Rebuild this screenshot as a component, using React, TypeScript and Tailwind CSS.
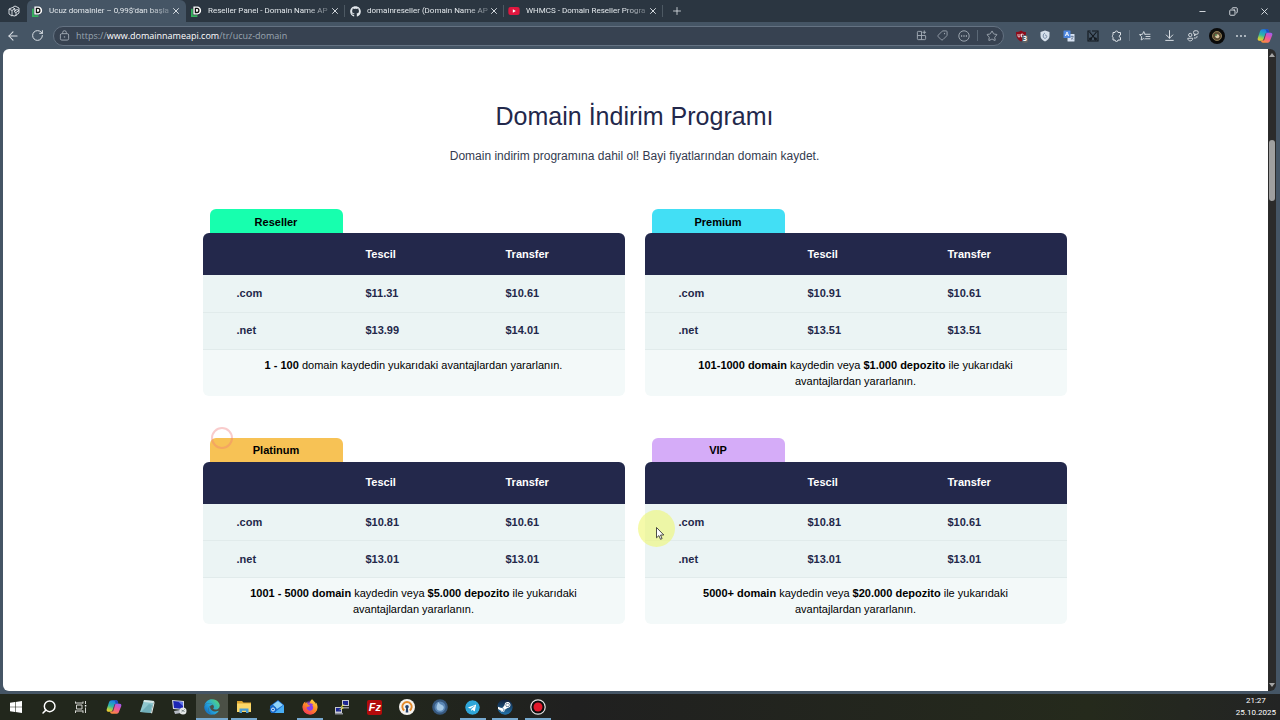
import type { ReactNode } from "react";
import { FaGithub, FaYoutube, FaEdge, FaFirefoxBrowser, FaSteam, FaTelegram } from "react-icons/fa";
import { ArrowDownToLine, ArrowLeft, Copy, Minus, Plus, RotateCw, Search, Star, Tag, X } from "lucide-react";

type Plan = {
  name: string;
  tab: string;
  com: [string, string];
  net: [string, string];
  note: ReactNode;
};

const plans: Plan[] = [
  {
    name: "Reseller",
    tab: "bg-[#17ffae]",
    com: ["$11.31", "$10.61"],
    net: ["$13.99", "$14.01"],
    note: (
      <>
        <b>1 - 100</b> domain kaydedin yukarıdaki avantajlardan yararlanın.
      </>
    ),
  },
  {
    name: "Premium",
    tab: "bg-[#42dff5]",
    com: ["$10.91", "$10.61"],
    net: ["$13.51", "$13.51"],
    note: (
      <>
        <b>101-1000 domain</b> kaydedin veya <b>$1.000 depozito</b> ile yukarıdaki avantajlardan yararlanın.
      </>
    ),
  },
  {
    name: "Platinum",
    tab: "bg-[#f7c255]",
    com: ["$10.81", "$10.61"],
    net: ["$13.01", "$13.01"],
    note: (
      <>
        <b>1001 - 5000 domain</b> kaydedin veya <b>$5.000 depozito</b> ile yukarıdaki avantajlardan yararlanın.
      </>
    ),
  },
  {
    name: "VIP",
    tab: "bg-[#d5acf8]",
    com: ["$10.81", "$10.61"],
    net: ["$13.01", "$13.01"],
    note: (
      <>
        <b>5000+ domain</b> kaydedin veya <b>$20.000 depozito</b> ile yukarıdaki avantajlardan yararlanın.
      </>
    ),
  },
];

function PlanCard({ plan }: { plan: Plan }) {
  return (
    <section aria-label={plan.name}>
      <h2
        className={`ml-[7px] flex h-6 w-[133px] items-center justify-center rounded-t-md pt-0.5 text-[11px] font-bold text-black ${plan.tab}`}
      >
        {plan.name}
      </h2>
      <div className="overflow-hidden rounded-md bg-[#f3f9f9]">
        <table className="w-full table-fixed border-collapse text-left text-[11px] text-[#23284a]">
          <colgroup>
            <col className="w-[38.6%]" />
            <col className="w-[33.2%]" />
            <col />
          </colgroup>
          <thead className="bg-[#23284b] text-white">
            <tr className="h-[42px]">
              <td />
              <th scope="col">Tescil</th>
              <th scope="col">Transfer</th>
            </tr>
          </thead>
          <tbody className="bg-[#ebf4f4] font-bold">
            {[
              { tld: ".com", prices: plan.com },
              { tld: ".net", prices: plan.net },
            ].map((row) => (
              <tr key={row.tld} className="h-[37px] border-b border-[#e1ebeb]">
                <th scope="row" className="pl-[34px]">
                  {row.tld}
                </th>
                <td>{row.prices[0]}</td>
                <td>{row.prices[1]}</td>
              </tr>
            ))}
          </tbody>
        </table>
        <p className="min-h-[46px] px-10 py-[7px] text-center text-[11px] leading-4 text-black">{plan.note}</p>
      </div>
    </section>
  );
}

function DomainFavicon() {
  return (
    <svg viewBox="0 0 12 12" className="size-[11px]">
      <path d="M1 3v8h6" fill="none" stroke="#35b05c" strokeWidth="2" />
      <path d="M2.600.6h4.200A4 4 0 0 1 11 4.900a4 4 0 0 1-4.200 4.300H2.600z" fill="#fff" />
      <path d="M4.800 2.700h1.800c1.300 0 2 .9 2 2.200s-.7 2.200-2 2.200H4.800z" fill="none" stroke="#111" strokeWidth="1.400" />
    </svg>
  );
}

function YoutubeFavicon() {
  return (
    <span className="flex h-2 w-3 items-center justify-center text-[#e1173f]">
      <FaYoutube className="size-3 bg-[linear-gradient(#fff,#fff)] bg-[length:4px_4px] bg-center bg-no-repeat" />
    </span>
  );
}

const tabs = [
  { title: "Ucuz domainler – 0,99$'dan başla", icon: <DomainFavicon />, active: true },
  { title: "Reseller Panel - Domain Name AP", icon: <DomainFavicon />, active: false },
  { title: "domainreseller (Domain Name AP", icon: <FaGithub className="size-[11px]" />, active: false },
  { title: "WHMCS - Domain Reseller Progra", icon: <YoutubeFavicon />, active: false },
];

function TabBar() {
  return (
    <header className="flex h-[22px] items-stretch bg-[#2b3641] text-[#e3e8ec]">
      <button aria-label="Çalışma alanları" className="flex w-[27px] items-center justify-center">
        <svg viewBox="0 0 24 24" className="size-3" fill="none" stroke="currentColor" strokeWidth="1.800" strokeLinejoin="round">
          <path d="M2 8l7-3 5 2.500V12M2 8l6 3v11l-6-4zM8 11l6-3.500" />
          <path d="M9 5l5-3 8 4v10l-8 6-6-1M12 13l4 2v7M12 13l6-4 4 2M16 15l6-4" />
        </svg>
      </button>
      {tabs.map((tab) => (
        <div
          key={tab.title}
          className={`flex w-[159px] items-center pr-[5px] pl-1 ${
            tab.active
              ? "rounded-t-md bg-[#455565]"
              : "bg-[linear-gradient(#4d5963,#4d5963)] bg-[length:1px_12px] bg-right bg-no-repeat"
          }`}
        >
          <span className="flex w-3 justify-center">{tab.icon}</span>
          <a
            href="#"
            className="ml-[6px] font-[Roboto,sans-serif] text-[8px] leading-4 whitespace-nowrap [mask-image:linear-gradient(to_right,black_82%,#0005)]"
          >
            {tab.title}
          </a>
          <button aria-label="Sekmeyi kapat" className="ml-auto flex w-2.5 justify-center">
            <X className="size-[10px]" strokeWidth={2.2} />
          </button>
        </div>
      ))}
      <button aria-label="Yeni sekme" className="flex w-[27px] items-center justify-center">
        <Plus className="size-3" strokeWidth={1.6} />
      </button>
      <div className="ml-auto flex">
        <button aria-label="Simge durumuna küçült" className="flex w-[31px] items-center justify-center">
          <Minus className="size-[9px]" strokeWidth={2.4} />
        </button>
        <button aria-label="Önceki boyut" className="flex w-[31px] items-center justify-center">
          <Copy className="size-[9px] -scale-x-100" strokeWidth={2.4} />
        </button>
        <button aria-label="Kapat" className="flex w-[31px] items-center justify-center">
          <X className="size-[11px]" />
        </button>
      </div>
    </header>
  );
}

function CopilotIcon({ className }: { className: string }) {
  return (
    <svg viewBox="0 0 24 24" className={className}>
      <defs>
        <linearGradient id="cp-a" x1="0.5" y1="0" x2="0.2" y2="1">
          <stop offset="0" stopColor="#1c7fe6" />
          <stop offset="0.5" stopColor="#2fb6a8" />
          <stop offset="0.75" stopColor="#9ccf4d" />
          <stop offset="1" stopColor="#f7ce2e" />
        </linearGradient>
        <linearGradient id="cp-b" x1="0.8" y1="0" x2="0.3" y2="1">
          <stop offset="0" stopColor="#a05bf0" />
          <stop offset="0.5" stopColor="#f0569a" />
          <stop offset="1" stopColor="#fb8c3b" />
        </linearGradient>
      </defs>
      <path d="M9 2h6c2 0 2.600 1.300 3 3l.5 2h-3c-2 0-2.700 1-3.300 3l-2 6.500c-.6 1.800-1.600 2.500-3.200 2.500H3.500C1 19 .6 17 1.200 15L4.500 5C5.200 3 6.500 2 9 2z" fill="url(#cp-a)" />
      <path d="M15 2h-4c2 0 2.500 1.200 3 3l.5 2h4C17.800 4 17.500 2 15 2z" fill="#1f49c4" />
      <path d="M15 22H9c-2 0-2.600-1.300-3-3h1c1.600 0 2.600-.7 3.200-2.500l2-6.500c.6-2 1.300-3 3.300-3h5c2.500 0 2.900 2 2.300 4l-3.300 8c-.7 2-2 3-4.500 3z" fill="url(#cp-b)" />
      <path d="M9.500 17.500l2.700-7.500c.5-1.600 1-2.400 2-2.800l-2.700 9.300c-.5 1.600-1.200 2.300-2.500 2.500z" fill="#2b3440" opacity=".75" />
    </svg>
  );
}

function ToolButton({ label, children }: { label: string; children: ReactNode }) {
  return (
    <button aria-label={label} className="flex w-6 items-center justify-center">
      {children}
    </button>
  );
}

function Toolbar() {
  return (
    <div className="flex h-[27px] items-center bg-[#455565] pr-[3px] pl-px text-[#dde2e7]">
      <ToolButton label="Geri">
        <ArrowLeft className="size-[14px]" strokeWidth={1.8} />
      </ToolButton>
      <ToolButton label="Yenile">
        <RotateCw className="size-[13px]" strokeWidth={1.8} />
      </ToolButton>
      <div className="ml-1 flex h-5 flex-1 items-center rounded-full border border-[#647282] bg-[#374251] pr-px pl-[5px] text-[#a4adb7]">
        <svg viewBox="0 0 12 12" className="size-[11px]" fill="none" stroke="currentColor">
          <rect x="1.500" y="4" width="9" height="7" rx="1.500" />
          <path d="M4 4V2.800a2 2 0 0 1 4 0V4" />
          <circle cx="6" cy="7.500" r=".8" fill="currentColor" stroke="none" />
        </svg>
        <a href="#" className="ml-[6px] flex-1 text-[9px] leading-4 text-[#9aa5b0]">
          https://<span className="text-white">www.domainnameapi.com</span>/tr/ucuz-domain
        </a>
        <button aria-label="Uygulamalar" className="flex w-[21px] justify-center">
          <svg viewBox="0 0 12 12" className="size-[11px]" fill="none" stroke="currentColor">
            <path d="M6 1.500H2.500a1 1 0 0 0-1 1v7a1 1 0 0 0 1 1h7a1 1 0 0 0 1-1V6.500M6 1.500v9M1.500 6h9M9 .5v4M7 2.500h4" />
          </svg>
        </button>
        <button aria-label="Alışveriş" className="flex w-[21px] justify-center">
          <Tag className="size-[11px] rotate-90" strokeWidth={1.8} />
        </button>
        <button aria-label="Diğer" className="flex w-[21px] justify-center">
          <svg viewBox="0 0 12 12" className="size-3" fill="none" stroke="currentColor">
            <circle cx="6" cy="6" r="5.200" strokeWidth=".9" />
            <path d="M3 6h1.200M5.400 6h1.200M7.800 6H9" strokeWidth="1.500" />
          </svg>
        </button>
        <span className="mx-[3px] h-[11px] w-px bg-[#5b6876]" />
        <button aria-label="Sık kullanılanlara ekle" className="flex w-[21px] justify-center">
          <Star className="size-3" strokeWidth={1.8} />
        </button>
      </div>
      <div className="ml-[5px] flex h-full items-center">
        <ToolButton label="uBlock Origin">
          <span className="relative">
            <svg viewBox="0 0 24 24" className="size-3">
              <path d="M12 1c3 2 7 3 10 3 0 9-2 15-10 19C4 19 2 13 2 4c3 0 7-1 10-3z" fill="#8e0c1b" />
              <path d="M6 8v4c0 3 4 3 4 0V8M13 8v6c6 0 6-6 0-6z" fill="none" stroke="#fff" strokeWidth="1.600" />
            </svg>
            <span className="absolute top-[5px] left-[7px] rounded-xs bg-[#5d6165] px-px text-[7px] leading-[8px] font-bold text-white">
              3
            </span>
          </span>
        </ToolButton>
        <ToolButton label="Koruma">
          <svg viewBox="0 0 24 24" className="size-3">
            <path d="M12 1l9 3v8c0 5-4 9-9 11-5-2-9-6-9-11V4z" fill="#d5dfea" />
            <path d="M12 6c-4 2-4 5-3 9 1 2 5 2 6 0s1-5-3-5" fill="none" stroke="#7a8ea8" strokeWidth="2" />
          </svg>
        </ToolButton>
        <ToolButton label="Çeviri">
          <svg viewBox="0 0 24 24" className="size-3">
            <rect x="9" y="8" width="14" height="15" rx="1" fill="#d7e2f2" />
            <rect x="1" y="1" width="14" height="15" rx="1" fill="#4d86e0" />
            <path d="M4.500 12L8 4l3.500 8M5.800 9.500h4.400" fill="none" stroke="#fff" strokeWidth="1.700" />
            <path d="M15 13h6M18 11v2M20 13c0 3-2 5-4 6M16 15l4 4" fill="none" stroke="#5d7190" strokeWidth="1.500" />
          </svg>
        </ToolButton>
        <ToolButton label="Ekran görüntüsü">
          <svg viewBox="0 0 24 24" className="size-3" fill="none" stroke="#11161c" strokeWidth="2.200">
            <path d="M7 2H2v20h20V2H10" />
            <path d="M5 4l11 13M19 4L8 17" />
            <circle cx="7" cy="18" r="1.800" />
            <circle cx="17" cy="18" r="1.800" />
          </svg>
        </ToolButton>
        <ToolButton label="Uzantılar">
          <svg viewBox="0 0 24 24" className="size-3" fill="none" stroke="currentColor" strokeWidth="2" strokeLinejoin="round">
            <path d="M4 5h4a3 3 0 0 1 6 0h5v5a2.500 2.500 0 1 0 0 5v5h-5a3 3 0 0 1-6 0H4v-5a3 3 0 0 1 0-5z" />
          </svg>
        </ToolButton>
        <span className="mr-[3px] h-[11px] w-px bg-[#637180]" />
        <ToolButton label="Sık kullanılanlar">
          <svg viewBox="0 0 24 24" className="size-3" fill="none" stroke="currentColor" strokeWidth="1.800" strokeLinejoin="round" strokeLinecap="round">
            <path d="M12 8.500L9.500 3 7 8.500l-6 .8 4.400 4.200L4.300 20l5.200-3 1 .6M12 8.500h10M14 13h8M13 17.500h9" />
          </svg>
        </ToolButton>
        <ToolButton label="İndirilenler">
          <ArrowDownToLine className="size-[13px]" strokeWidth={1.8} />
        </ToolButton>
        <ToolButton label="Paylaş">
          <svg viewBox="0 0 24 24" className="size-3" fill="none" stroke="currentColor" strokeWidth="1.800">
            <circle cx="6.500" cy="10" r="3.300" />
            <path d="M1.500 16.500h10c0 7-10 7-10 0z" />
            <rect x="13" y="1.500" width="9.500" height="7" rx="3" />
            <path d="M15 8.500v3.500l3-3.500M14 16h3c3 0 3-2 3-4" />
          </svg>
        </ToolButton>
        <ToolButton label="Profil">
          <svg viewBox="0 0 16 16" className="size-4">
            <circle cx="8" cy="8" r="8" fill="#0a0a0a" />
            <circle cx="8" cy="8" r="4.500" fill="#5b4a33" stroke="#8b7b54" />
            <circle cx="8.300" cy="8.300" r="2" fill="#d9c7a4" />
            <circle cx="7" cy="7" r="1" fill="#4c8a55" />
          </svg>
        </ToolButton>
        <ToolButton label="Ayarlar ve daha fazlası">
          <svg viewBox="0 0 12 12" className="size-3" fill="currentColor">
            <circle cx="2" cy="6" r=".9" />
            <circle cx="6" cy="6" r=".9" />
            <circle cx="10" cy="6" r=".9" />
          </svg>
        </ToolButton>
        <ToolButton label="Copilot">
          <CopilotIcon className="size-4" />
        </ToolButton>
      </div>
    </div>
  );
}

const apps: { label: string; icon: ReactNode; state?: "open" | "active" }[] = [
  {
    label: "Başlat",
    icon: (
      <svg viewBox="0 0 12 12" className="size-3" fill="#fff">
        <path d="M0 1.700l5-.7v4.700H0zM5.600.9L12 0v5.700H5.600zM0 6.300h5V11l-5-.7zM5.600 6.300H12V12l-6.400-.9z" />
      </svg>
    ),
  },
  {
    label: "Ara",
    icon: <Search className="size-4 -scale-x-100 text-white" strokeWidth={2.2} />,
  },
  {
    label: "Görev görünümü",
    icon: (
      <svg viewBox="0 0 12 12" className="size-3" fill="none" stroke="#d5d6d2">
        <path d="M.5 2.500V.5M8 2.500V.5M.5 2H8M1.500 4h5.500v4H1.500zM.5 10H8M.5 9.500V12M8 9.500V12M10.500 0v3M10.500 6.500V12" />
        <path d="M9.800 4h1.500v1.500H9.800z" fill="#fff" stroke="none" />
      </svg>
    ),
  },
  { label: "Copilot", icon: <CopilotIcon className="size-4" /> },
  {
    label: "Not Defteri",
    icon: (
      <svg viewBox="0 0 16 16" className="size-4">
        <path d="M5 1l10 1-3 12-11-1z" fill="#8fc7cf" />
        <path d="M5 1l10 1-.5 2-10-1z" fill="#d8e9e9" />
        <path d="M15 2l-3 12 1 .5L15.500 4z" fill="#eef2ef" />
        <path d="M2 13l8-8 3 1-2 8z" fill="#5c9faa" opacity=".6" />
      </svg>
    ),
  },
  {
    label: "Uzak Masaüstü",
    icon: (
      <svg viewBox="0 0 16 16" className="size-4">
        <path d="M1 1l12 1v9L2 10z" fill="#d4d8e4" />
        <path d="M2.200 2l9.800.9v7L3 9z" fill="#1d26b5" />
        <path d="M7 2.500l5 .4v4z" fill="#6176ec" />
        <path d="M3 12l6-1 1 3-6 1z" fill="#b5bac3" />
        <circle cx="12" cy="12" r="3.500" fill="#e5e8e8" />
        <path d="M10.500 13l1.200-1-1-1.200M13.500 10.500l-1.200 1.200 1.200 1.300" fill="none" stroke="#566" strokeWidth=".8" />
      </svg>
    ),
  },
  {
    label: "Microsoft Edge",
    state: "active",
    icon: <FaEdge className="size-4 [&_path]:fill-[url(#edge-fill)]" />,
  },
  {
    label: "Dosya Gezgini",
    state: "open",
    icon: (
      <svg viewBox="0 0 16 16" className="size-4">
        <path d="M1 2h5l1.500 1.500H15V13H1z" fill="#dba32f" />
        <path d="M1 4.500h14V13H1z" fill="#fbd768" />
        <path d="M3.500 14V9.500h9V14h-2.500v-2.200H6V14z" fill="#4a9dd4" />
      </svg>
    ),
  },
  {
    label: "Posta",
    icon: (
      <svg viewBox="0 0 16 16" className="size-4">
        <path d="M1 7l8-6 6 5v8H2z" fill="#1e6fd0" />
        <path d="M4 5.500L9 2l5 4-6 4z" fill="#8fd4fa" />
        <path d="M15 6v8H5z" fill="#48aef4" />
        <circle cx="4" cy="10.500" r="3.200" fill="#1467c7" />
        <circle cx="4" cy="10.500" r="1.500" fill="none" stroke="#fff" strokeWidth=".9" />
      </svg>
    ),
  },
  {
    label: "Firefox",
    state: "open",
    icon: (
      <FaFirefoxBrowser className="size-4 rounded-full bg-[radial-gradient(circle,#8b3ee8_35%,transparent_60%)] [&_path]:fill-[url(#fox-fill)]" />
    ),
  },
  {
    label: "PuTTY",
    icon: (
      <svg viewBox="0 0 16 16" className="size-4">
        <path d="M8 1h7v6H8zM1 8h7v6H1z" fill="#c6c8cf" />
        <path d="M9 2h5v4H9zM2 9h5v3.500H2z" fill="#1c2795" />
        <path d="M7 8h8v1.500H7zM1 14h8v1.500H1z" fill="#8e9199" />
        <path d="M11 4.500L6.500 7.500 9 8l-4.500 3.500L10 9 8 8z" fill="#f4ee3b" />
      </svg>
    ),
  },
  {
    label: "FileZilla",
    icon: (
      <span className="flex size-[15px] items-center justify-center rounded-xs bg-[#b30b0b] font-['Liberation_Sans',sans-serif] text-[11px] leading-none font-bold text-white italic">
        Fz
      </span>
    ),
  },
  {
    label: "OpenVPN",
    icon: (
      <svg viewBox="0 0 16 16" className="size-4">
        <circle cx="8" cy="8" r="8" fill="#f4f2ee" />
        <path d="M5.300 11.500a4.700 4.700 0 1 1 5.400 0" fill="none" stroke="#e48a2b" strokeWidth="1.900" />
        <circle cx="8" cy="7.700" r="1.800" fill="#24406a" />
        <path d="M7.200 8h1.600l.5 5.500H6.700z" fill="#24406a" />
      </svg>
    ),
  },
  {
    label: "Tarayıcı",
    icon: (
      <svg viewBox="0 0 16 16" className="size-4">
        <circle cx="8" cy="8" r="7.800" fill="#37587e" />
        <circle cx="8" cy="8" r="5.500" fill="#5b87b5" />
        <path d="M6 3c0 2-1.500 3-1.500 5.500a3.700 3.700 0 0 0 7.300.3C12 6 9 6 7.500 4.500z" fill="#a4c7e4" />
      </svg>
    ),
  },
  {
    label: "Telegram",
    state: "open",
    icon: (
      <FaTelegram className="size-[15px] rounded-full bg-[radial-gradient(circle,white_55%,transparent_60%)] text-[#2fa6d9]" />
    ),
  },
  {
    label: "Steam",
    state: "open",
    icon: (
      <FaSteam className="size-4 rounded-full bg-[radial-gradient(circle,white_60%,transparent_65%)] [&_path]:fill-[url(#steam-fill)]" />
    ),
  },
  {
    label: "Kayıt",
    state: "open",
    icon: (
      <svg viewBox="0 0 16 16" className="size-4">
        <circle cx="8" cy="8" r="7.200" fill="#0d0d0d" stroke="#e5e5e5" strokeWidth="1.200" />
        <circle cx="8" cy="8" r="4.500" fill="#e3192b" />
      </svg>
    ),
  },
];

function Taskbar() {
  return (
    <footer className="flex h-[26px] items-stretch justify-between bg-[linear-gradient(to_right,#22271c,#22271c_30%,#202020_45%,#252a1c_85%,#232424)]">
      <svg className="absolute size-0" aria-hidden="true">
        <linearGradient id="edge-fill" x1="0" y1="1" x2="1" y2="0.2">
          <stop offset="0" stopColor="#1060b8" />
          <stop offset="0.5" stopColor="#24a5df" />
          <stop offset="1" stopColor="#55d67a" />
        </linearGradient>
        <linearGradient id="fox-fill" x1="0.8" y1="0" x2="0.2" y2="1">
          <stop offset="0" stopColor="#ffdf3d" />
          <stop offset="0.5" stopColor="#ff8a25" />
          <stop offset="1" stopColor="#f32d5f" />
        </linearGradient>
        <linearGradient id="steam-fill" x1="0" y1="0" x2="0" y2="1">
          <stop offset="0" stopColor="#101d38" />
          <stop offset="1" stopColor="#2274ac" />
        </linearGradient>
      </svg>
      <nav className="flex w-[554px]" aria-label="Görev çubuğu">
        {apps.map((app) => (
          <button
            key={app.label}
            aria-label={app.label}
            className={`flex flex-1 flex-col items-center ${app.state === "active" ? "bg-[#4b5046]" : ""}`}
          >
            <span className="flex flex-1 items-center">{app.icon}</span>
            <span
              className={
                app.state === "active"
                  ? "-mt-0.5 h-0.5 w-full bg-[#76a9cf]"
                  : app.state === "open"
                    ? "-mt-0.5 h-0.5 w-[26px] bg-[#76a9cf]"
                    : "h-0"
              }
            />
          </button>
        ))}
      </nav>
      <div className="flex flex-col justify-center pr-1 text-center font-[Roboto,sans-serif] text-[8px] leading-3 text-white">
        <time>21:27</time>
        <time>25.10.2025</time>
      </div>
    </footer>
  );
}

function Scrollbar() {
  return (
    <div className="flex w-2 flex-col items-center rounded-r-md bg-[#2b2b2b] py-1" aria-hidden="true">
      <svg viewBox="0 0 6 4" className="h-1 w-1.5" fill="#a5a5a5">
        <path d="M0 4l3-4 3 4z" />
      </svg>
      <span className="mt-[83px] h-[61px] w-1.5 rounded-full bg-[#9f9f9f]" />
      <svg viewBox="0 0 6 4" className="mt-auto h-1 w-1.5" fill="#a5a5a5">
        <path d="M0 0l3 4 3-4z" />
      </svg>
    </div>
  );
}

export default function App() {
  return (
    <div className="relative flex min-h-screen flex-col bg-[#455565] font-['Open_Sans',sans-serif]">
      <TabBar />
      <Toolbar />
      <div className="flex flex-1 pr-1 pb-[3px] pl-[3px]">
        <main className="flex-1 rounded-l-md bg-white pt-[51px] pr-0.5 pb-16 font-['Liberation_Sans',sans-serif]">
          <h1 className="text-center text-[25px] leading-8 text-[#23284b]">Domain İndirim Programı</h1>
          <p className="mt-4 text-center text-xs leading-4 text-[#343b4f]">
            Domain indirim programına dahil ol! Bayi fiyatlarından domain kaydet.
          </p>
          <div className="mx-auto mt-[45px] grid max-w-[864px] grid-cols-2 gap-x-5 gap-y-[42px]">
            {plans.map((plan) => (
              <PlanCard key={plan.name} plan={plan} />
            ))}
          </div>
        </main>
        <Scrollbar />
      </div>
      <Taskbar />
      <span className="absolute top-[427px] left-[211px] size-[22px] rounded-full border-2 border-[#f0787860]" />
      <span className="absolute top-[510px] left-[638px] size-[37px] rounded-full bg-[#eff771] opacity-60" />
      <svg viewBox="0 0 9 13" className="absolute top-[527px] left-[656px] h-[13px] w-[9px]">
        <path d="M.5.500v10.300l2.400-2.200 1.600 3.700 1.600-.7-1.600-3.600h3.300z" fill="#fff" stroke="#222" strokeWidth=".8" />
      </svg>
    </div>
  );
}
